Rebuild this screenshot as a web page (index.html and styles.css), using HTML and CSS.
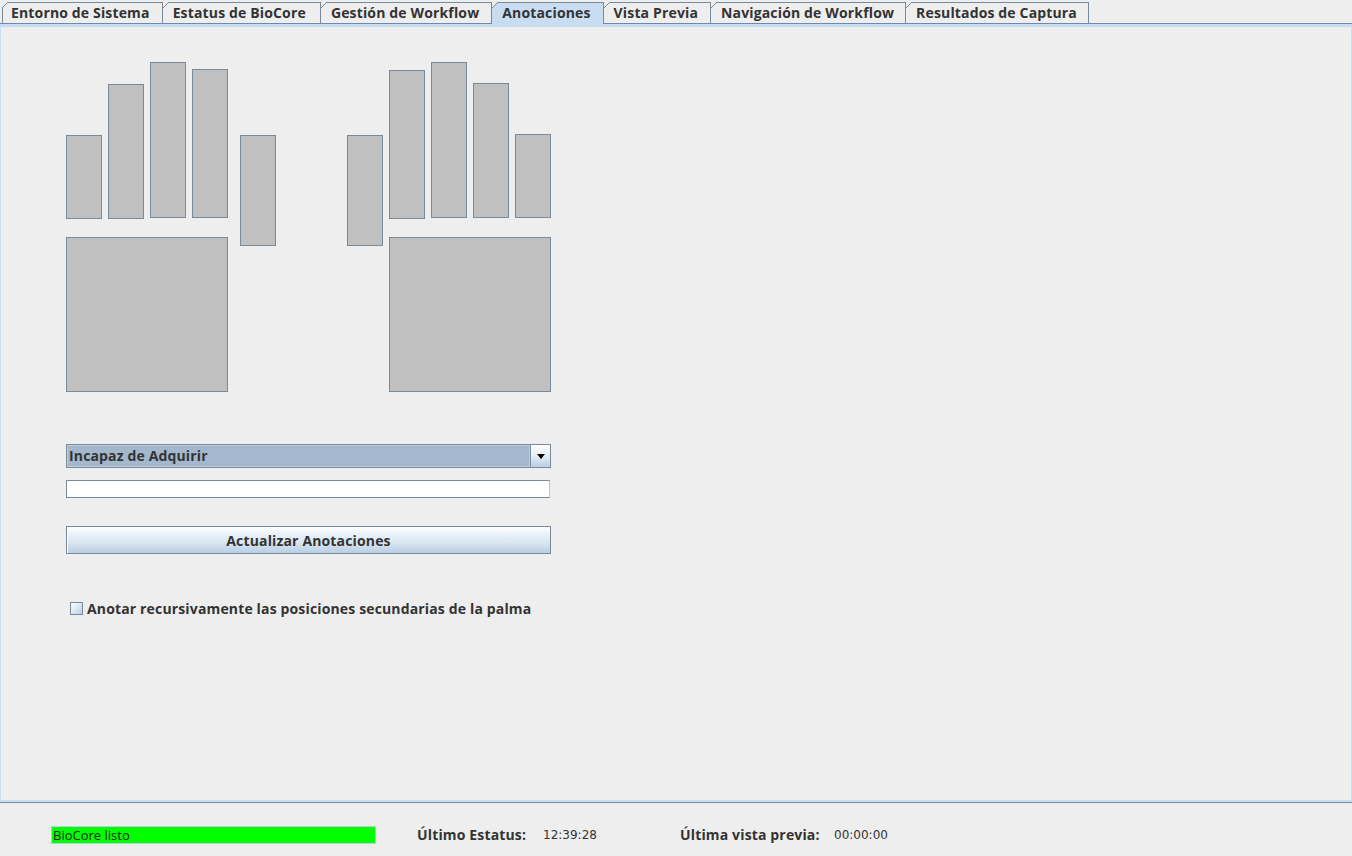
FILE: index.html
```html
<!DOCTYPE html>
<html lang="es">
<head>
<meta charset="utf-8">
<title>Anotaciones</title>
<link rel="stylesheet" href="styles.css">
</head>
<body>
<div class="app">
  <div class="tabstrip">
    <div class="tab first">Entorno de Sistema</div>
    <div class="tab">Estatus de BioCore</div>
    <div class="tab">Gestión de Workflow</div>
    <div class="tab selected">Anotaciones</div>
    <div class="tab">Vista Previa</div>
    <div class="tab">Navigación de Workflow</div>
    <div class="tab">Resultados de Captura</div>
  </div>
  <div class="content">
    <div class="hands">
      <div class="part l-little"></div>
      <div class="part l-ring"></div>
      <div class="part l-middle"></div>
      <div class="part l-index"></div>
      <div class="part l-thumb"></div>
      <div class="part l-palm"></div>
      <div class="part r-thumb"></div>
      <div class="part r-index"></div>
      <div class="part r-middle"></div>
      <div class="part r-ring"></div>
      <div class="part r-little"></div>
      <div class="part r-palm"></div>
    </div>
    <div class="combo">
      <div class="combo-value">Incapaz de Adquirir</div>
      <div class="combo-btn">
        <svg width="8" height="5" viewBox="0 0 8 5"><path d="M0 0H8L4 5Z" fill="#000"/></svg>
      </div>
    </div>
    <div class="textfield"></div>
    <button class="btn">Actualizar Anotaciones</button>
    <label class="check"><span class="box"></span><span class="check-label">Anotar recursivamente las posiciones secundarias de la palma</span></label>
  </div>
  <div class="statusbar">
    <div class="ready">BioCore listo</div>
    <div class="st-label st-l1">Último Estatus:</div>
    <div class="st-value st-v1">12:39:28</div>
    <div class="st-label st-l2">Última vista previa:</div>
    <div class="st-value">00:00:00</div>
  </div>
</div>
</body>
</html>
```

FILE: styles.css
```css
* { box-sizing: border-box; }
html, body {
  margin: 0;
  padding: 0;
  background: #eeeeee;
}
body {
  font-family: "Open Sans", "Noto Sans", "DejaVu Sans", sans-serif;
  font-size: 14px;
  color: #333333;
}
.tab, .combo-value, .btn, .check, .st-label {
  font-weight: 700;
  letter-spacing: 0.15px;
}
.app {
  width: 1352px;
  height: 856px;
  display: flex;
  flex-direction: column;
  overflow: hidden;
}

/* Tabs */
.tabstrip {
  height: 24px;
  flex: none;
  display: flex;
  align-items: flex-end;
  padding: 2px 0 0 2px;
  border-bottom: 1px solid #6f88b3;
}
.tab {
  position: relative;
  height: 21px;
  padding: 1px 12px 1px 10px;
  line-height: 18px;
  white-space: nowrap;
  background: #eeeeee;
  border-top: 1px solid #7a8a99;
  border-right: 1px solid #7a8a99;
}
.tab.first {
  border-left: 1px solid #7a8a99;
  padding-left: 8px;
}
.tab:nth-child(2) { padding-right: 14px; }
.tab:nth-child(6) { padding-right: 11px; }
.tab:nth-child(7) { padding-right: 11px; }
.tab::before {
  content: "";
  position: absolute;
  top: -1px;
  left: 0;
  width: 6px;
  height: 6px;
  background: linear-gradient(135deg, #eeeeee 0 44%, #7a8a99 44% 57%, transparent 57%);
}
.tab.first::before { left: -1px; }
.tab.selected {
  background: #c8ddf2;
  height: 22px;
  margin-bottom: -1px;
  padding-bottom: 2px;
}

/* Content */
.content {
  flex: 1;
  border-top: 3px solid #c8ddf2;
  border-left: 1px solid #c8ddf2;
  border-right: 1px solid #c8ddf2;
  border-bottom: 2px solid #c8ddf2;
  padding-left: 65px;
  display: flex;
  flex-direction: column;
  align-items: flex-start;
}
.hands {
  position: relative;
  width: 485px;
  height: 330px;
  margin-top: 35px;
  flex: none;
}
.part {
  position: absolute;
  background: #c0c0c0;
  border: 1px solid #7a8a99;
  width: 36px;
}
.l-little { left: 0;   top: 73px; height: 84px; }
.l-ring   { left: 42px; top: 22px; height: 135px; }
.l-middle { left: 84px; top: 0;   height: 156px; }
.l-index  { left: 126px; top: 7px; height: 149px; }
.l-thumb  { left: 174px; top: 73px; height: 111px; }
.l-palm   { left: 0; top: 175px; width: 162px; height: 155px; }
.r-thumb  { left: 281px; top: 73px; height: 111px; }
.r-index  { left: 323px; top: 8px;  height: 149px; }
.r-middle { left: 365px; top: 0;    height: 156px; }
.r-ring   { left: 407px; top: 21px; height: 135px; }
.r-little { left: 449px; top: 72px; height: 84px; }
.r-palm   { left: 323px; top: 175px; width: 162px; height: 155px; }

.combo {
  margin-top: 52px;
  width: 485px;
  height: 24px;
  display: flex;
  border: 1px solid #7a8a99;
  background: #a3b8cc;
}
.combo-value {
  flex: 1;
  border: 1px solid #bccde0;
  padding: 1px 0 1px 1px;
  line-height: 18px;
}
.combo-btn {
  width: 20px;
  border-left: 1px solid #7a8a99;
  background: linear-gradient(#ffffff, #e4edf6 50%, #b8cfe5);
  display: flex;
  align-items: center;
  justify-content: center;
}
.combo-btn svg { display: block; margin-top: 1px; }

.textfield {
  margin-top: 12px;
  width: 484px;
  height: 18px;
  background: #ffffff;
  border: 1px solid #7a8a99;
  border-right-color: #b8c4cf;
}

.btn {
  margin: 28px 0 0 0;
  padding: 1px 0 0 0;
  width: 485px;
  height: 28px;
  font-family: inherit;
  font-size: 14px;
  color: #333333;
  line-height: 25px;
  border: 1px solid #7a8a99;
  background: linear-gradient(#ffffff, #e6eef7 35%, #dde8f3 55%, #b8cfe5);
  box-shadow: inset 1px 1px 0 #ffffff;
}

.check {
  margin: 48px 0 0 4px;
  display: flex;
  align-items: center;
  height: 13px;
  line-height: 13px;
}
.box {
  width: 13px;
  height: 13px;
  border: 1px solid #7a8a99;
  background: linear-gradient(135deg, #ffffff, #b8cfe5);
  margin-right: 4px;
}

/* Status bar */
.statusbar {
  flex: none;
  height: 54px;
  border-top: 1px solid #7a8a99;
  padding-top: 23px;
  display: flex;
  align-items: flex-start;
}
.ready {
  margin-left: 51px;
  width: 325px;
  height: 18px;
  background: #00ff00;
  border: 1px solid #b8cfe5;
  padding-left: 1px;
  font-size: 13px;
  line-height: 16px;
  color: #222222;
}
.st-label {
  height: 18px;
  line-height: 18px;
}
.st-l1 { margin-left: 41px; width: 126px; }
.st-l2 { width: 154px; }
.st-value {
  height: 18px;
  line-height: 18px;
  font-family: "DejaVu Sans", sans-serif;
  font-size: 12px;
  color: #333333;
}
.st-v1 { width: 137px; }
```
